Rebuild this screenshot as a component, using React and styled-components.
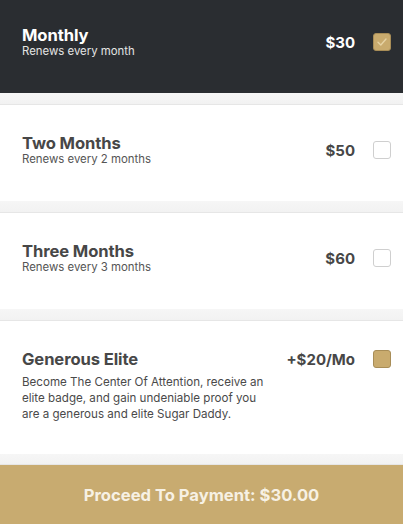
import React, { useState } from 'react'
import styled, { createGlobalStyle } from 'styled-components'

const GlobalStyle = createGlobalStyle`
  html, body {
    margin: 0;
    padding: 0;
    background: #f4f4f4;
    font-family: Inter, "Open Sans", sans-serif;
  }
`

const plans = [
  { id: 'monthly', title: 'Monthly', sub: 'Renews every month', price: '$30' },
  { id: 'two', title: 'Two Months', sub: 'Renews every 2 months', price: '$50' },
  { id: 'three', title: 'Three Months', sub: 'Renews every 3 months', price: '$60' },
]

const Check = ({ checked, gold }) => (
  <Box checked={checked} gold={gold}>
    {checked && (
      <svg width="12" height="12" viewBox="0 0 12 12">
        <path d="M2 6.3 L4.8 9 L10 3" fill="none" stroke="#e6d3a4" strokeWidth="1.4" strokeLinecap="round" strokeLinejoin="round" />
      </svg>
    )}
  </Box>
)

export default function App() {
  const [selected] = useState('monthly')
  return (
    <Page>
      <GlobalStyle />
      {plans.map((p) => (
        <React.Fragment key={p.id}>
          <Plan dark={selected === p.id} height={p.id === 'monthly' ? 93 : 96}>
            <Info>
              <Title dark={selected === p.id}>{p.title}</Title>
              <Sub dark={selected === p.id}>{p.sub}</Sub>
            </Info>
            <Price dark={selected === p.id}>{p.price}</Price>
            <Check checked={selected === p.id} gold={selected === p.id} />
          </Plan>
          <Gap />
        </React.Fragment>
      ))}
      <Elite>
        <Info>
          <Title>Generous Elite</Title>
          <Desc>
            Become The Center Of Attention, receive an elite badge, and gain
            undeniable proof you are a generous and elite Sugar Daddy.
          </Desc>
        </Info>
        <Price>+$20/Mo</Price>
        <Check gold />
      </Elite>
      <Gap short />
      <Footer>Proceed To Payment: $30.00</Footer>
    </Page>
  )
}

const Page = styled.div`
  width: 403px;
  height: 524px;
  display: flex;
  flex-direction: column;
  overflow: hidden;
`
const Plan = styled.div`
  height: ${(p) => p.height}px;
  flex-shrink: 0;
  display: flex;
  align-items: center;
  padding: 0 12px ${(p) => (p.dark ? 9 : 6)}px 22px;
  box-sizing: border-box;
  background: ${(p) => (p.dark ? '#2a2d31' : '#ffffff')};
`
const Elite = styled.div`
  height: 133px;
  flex-shrink: 0;
  display: flex;
  align-items: flex-start;
  padding: 29px 12px 0 22px;
  box-sizing: border-box;
  background: #ffffff;
`
const Gap = styled.div`
  height: ${(p) => (p.short ? 10 : 11)}px;
  flex-shrink: 0;
  background: linear-gradient(#f6f6f6, #f2f2f2);
  border-bottom: 1px solid #e6e6e6;
`
const Info = styled.div`
  flex: 1;
  display: flex;
  flex-direction: column;
`
const Title = styled.div`
  font-size: 16.6px;
  font-weight: 700;
  line-height: 19px;
  letter-spacing: -0.1px;
  color: ${(p) => (p.dark ? '#ffffff' : '#474747')};
`
const Sub = styled.div`
  font-size: 11.4px;
  line-height: 13px;
  color: ${(p) => (p.dark ? '#e4e4e4' : '#555555')};
`
const Desc = styled.div`
  margin-top: 5px;
  max-width: 248px;
  font-size: 11.6px;
  line-height: 16px;
  color: #4a4a4a;
`
const Price = styled.div`
  font-size: 15px;
  font-weight: 700;
  line-height: 19px;
  color: ${(p) => (p.dark ? '#ffffff' : '#474747')};
`
const Box = styled.div`
  width: 18px;
  height: 18px;
  margin-left: 18px;
  box-sizing: border-box;
  border-radius: 3px;
  display: flex;
  align-items: center;
  justify-content: center;
  background: ${(p) => (p.gold ? '#c9ab6e' : '#ffffff')};
  border: 1px solid ${(p) => (p.gold ? '#a88d57' : '#cfcfcf')};
  flex-shrink: 0;
`
const Footer = styled.div`
  flex: 1;
  display: flex;
  align-items: center;
  justify-content: center;
  background: #c8ab70;
  color: #f7f1e4;
  font-size: 16.6px;
  font-weight: 700;
`
